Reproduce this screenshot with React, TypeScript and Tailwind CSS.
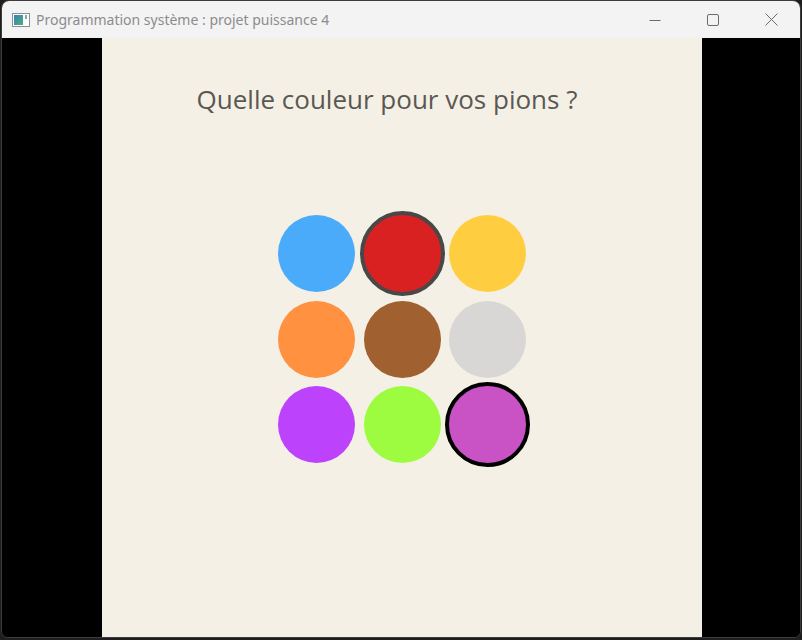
import React from "react";

type Pion = { color: string; ring?: string };

const PIONS: Pion[] = [
  { color: "#4aabfa" },
  { color: "#da2121", ring: "#484848" },
  { color: "#ffce40" },
  { color: "#ff9140" },
  { color: "#a0602f" },
  { color: "#d9d7d5" },
  { color: "#bd42fb" },
  { color: "#9dfc40" },
  { color: "#c953c4", ring: "#000000" },
];

function AppIcon() {
  return (
    <svg width="18" height="14" viewBox="0 0 18 14">
      <defs>
        <linearGradient id="g" x1="0" y1="0" x2="1" y2="1">
          <stop offset="0" stopColor="#3a7fb8" />
          <stop offset="1" stopColor="#4fb07a" />
        </linearGradient>
      </defs>
      <rect x="0.5" y="0.5" width="17" height="13" fill="#fff" stroke="#8a8f96" />
      <rect x="2" y="2" width="9" height="10" fill="url(#g)" />
      <rect x="13" y="2" width="2" height="4" fill="#7fa6c4" />
    </svg>
  );
}

function Controls() {
  return (
    <div className="flex h-full items-center text-[#6b6b6b]">
      <div className="flex w-[58px] justify-center">
        <svg width="12" height="12" viewBox="0 0 12 12">
          <path d="M0.5 6.5h11" stroke="currentColor" strokeWidth="1" />
        </svg>
      </div>
      <div className="flex w-[58px] justify-center">
        <svg width="12" height="12" viewBox="0 0 12 12">
          <rect x="0.5" y="0.5" width="11" height="11" rx="1.5" fill="none" stroke="currentColor" />
        </svg>
      </div>
      <div className="flex w-[58px] justify-center">
        <svg width="13" height="13" viewBox="0 0 13 13">
          <path d="M0.5 0.5l12 12M12.5 0.5l-12 12" stroke="currentColor" strokeWidth="1" />
        </svg>
      </div>
    </div>
  );
}

export default function App() {
  return (
    <div className="h-[640px] w-[802px] overflow-hidden bg-[#1e1e1e]">
      <div className="ml-px flex h-[638px] w-[800px] flex-col overflow-hidden rounded-t-[8px] rounded-b-[7px] border border-[#3c3c3c] bg-black">
        <div className="flex h-[37px] shrink-0 items-center justify-between bg-[#f3f3f3]">
          <div className="flex items-center gap-[6px] pl-[10px]" style={{ fontFamily: '"Noto Sans", sans-serif' }}>
            <AppIcon />
            <span className="text-[14px] text-[#8c8c8c]">Programmation système : projet puissance 4</span>
          </div>
          <Controls />
        </div>
        <div className="flex flex-1">
          <div className="w-[100px] bg-black" />
          <div
            className="flex w-[600px] flex-col items-center bg-[#f5f0e6] pt-[43px]"
            style={{ fontFamily: '"Open Sans", sans-serif' }}
          >
            <h1 className="pr-[30px] text-[26px] leading-[36px] text-[#5a5853]">Quelle couleur pour vos pions ?</h1>
            <div className="mt-[94px] grid grid-cols-[repeat(3,85.5px)] grid-rows-[repeat(3,85.5px)]">
              {PIONS.map((p, i) => (
                <div key={i} className="flex items-center justify-center">
                  {p.ring ? (
                    <div
                      className="h-[85px] w-[85px] rounded-full border-4"
                      style={{ background: p.color, borderColor: p.ring }}
                    />
                  ) : (
                    <div className="h-[77px] w-[77px] rounded-full" style={{ background: p.color }} />
                  )}
                </div>
              ))}
            </div>
          </div>
          <div className="flex-1 bg-black" />
        </div>
      </div>
    </div>
  );
}
